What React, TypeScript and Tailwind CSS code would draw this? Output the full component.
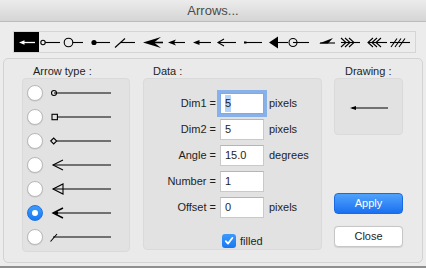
import React from 'react';

const CY = 42.5;

// Toolbar strip with all arrow styles, drawn in window coordinates
function ArrowStrip() {
  return (
    <svg width={401} height={20} viewBox="14 32 401 20">
      <rect x={14} y={32} width={25} height={20} fill="#000" />
      <line x1={22} y1={CY} x2={35} y2={CY} stroke="#fff" strokeWidth={1.3} />
      <polygon points={`19,${CY} 24.5,${CY - 2.3} 24.5,${CY + 2.3}`} fill="#fff" />

      <g stroke="#000" strokeWidth={1.1} fill="none">
        <circle cx={43} cy={CY} r={2.2} />
        <line x1={45.2} y1={CY} x2={60} y2={CY} />
        <circle cx={68.5} cy={CY} r={4.3} />
        <line x1={72.8} y1={CY} x2={83} y2={CY} />
        <line x1={94} y1={CY} x2={110} y2={CY} />
        <line x1={115} y1={47.5} x2={125} y2={38.5} />
        <line x1={120} y1={CY} x2={135} y2={CY} />
        <line x1={152} y1={CY} x2={163} y2={CY} strokeWidth={1.6} />
        <line x1={170} y1={CY} x2={185} y2={CY} />
        <line x1={196} y1={CY} x2={211} y2={CY} />
        <polyline points={`224,${CY - 3.5} 218,${CY} 224,${CY + 3.5}`} />
        <line x1={218} y1={CY} x2={236} y2={CY} />
        <line x1={244} y1={CY} x2={262} y2={CY} />
        <line x1={277} y1={CY} x2={288} y2={CY} />
        <circle cx={293} cy={CY} r={4} />
        <line x1={293} y1={CY} x2={309} y2={CY} />
        <line x1={320} y1={CY + 0.5} x2={335} y2={CY + 0.5} />
        <polyline points={`341,38 346,${CY} 341,47`} />
        <polyline points={`345,38 350,${CY} 345,47`} />
        <polyline points={`349,38 354,${CY} 349,47`} />
        <line x1={341} y1={CY} x2={360} y2={CY} />
        <polyline points={`373,38 368,${CY} 373,47`} />
        <polyline points={`377,38 372,${CY} 377,47`} />
        <polyline points={`381,38 376,${CY} 381,47`} />
        <line x1={368} y1={CY} x2={387} y2={CY} />
        <line x1={391} y1={47} x2={397} y2={38.5} />
        <line x1={395} y1={47} x2={401} y2={38.5} />
        <line x1={399} y1={47} x2={405} y2={38.5} />
        <line x1={390} y1={CY} x2={410} y2={CY} />
      </g>

      <g fill="#000">
        <circle cx={94} cy={CY} r={2.6} />
        <polygon points={`143,${CY} 161,37 154,${CY} 161,48`} />
        <polygon points={`168,${CY} 176,${CY - 3} 174,${CY} 176,${CY + 3}`} />
        <polygon points={`193,${CY} 199.5,${CY - 2.5} 199.5,${CY + 2.5}`} />
        <rect x={244} y={CY - 1} width={2.5} height={2} />
        <polygon points={`269,${CY} 278,36.5 278,48.5`} />
        <polygon points={`319,${CY + 1} 333,38 328,${CY + 1}`} />
      </g>
    </svg>
  );
}

function TypeArrow({ kind }: { kind: number }) {
  const y = 8;
  return (
    <svg width={62} height={16} viewBox="0 0 62 16">
      <g stroke="#000" strokeWidth={1.1} fill="none">
        {kind === 0 && (
          <>
            <circle cx={4} cy={y} r={2.5} />
            <line x1={4} y1={y} x2={61} y2={y} />
          </>
        )}
        {kind === 1 && (
          <>
            <rect x={2} y={y - 2.7} width={5.4} height={5.4} />
            <line x1={7.4} y1={y} x2={61} y2={y} />
          </>
        )}
        {kind === 2 && (
          <>
            <polygon points={`0.7,${y} 3.7,${y - 3} 6.7,${y} 3.7,${y + 3}`} />
            <line x1={6.7} y1={y} x2={61} y2={y} />
          </>
        )}
        {kind === 3 && (
          <>
            <polyline points={`13,${y - 5} 3,${y} 13,${y + 5}`} />
            <line x1={3} y1={y} x2={61} y2={y} />
          </>
        )}
        {kind === 4 && (
          <>
            <polygon points={`3,${y} 13,${y - 5} 13,${y + 5}`} />
            <line x1={3} y1={y} x2={61} y2={y} />
          </>
        )}
        {kind === 5 && (
          <>
            <polyline points={`13,${y - 5} 3,${y} 13,${y + 5}`} strokeWidth={1.4} />
            <line x1={3} y1={y} x2={61} y2={y} />
          </>
        )}
        {kind === 6 && (
          <>
            <line x1={0.5} y1={y + 4.5} x2={7} y2={y - 3} />
            <line x1={3} y1={y} x2={61} y2={y} />
          </>
        )}
      </g>
      {kind === 5 && <polygon points={`3,${y} 8,${y - 1.8} 8,${y + 1.8}`} fill="#000" />}
    </svg>
  );
}

function Radio({ checked }: { checked?: boolean }) {
  if (checked) {
    return (
      <div className="flex h-[16px] w-[16px] items-center justify-center rounded-full border border-[#1c74e3] bg-gradient-to-b from-[#3f9bfc] to-[#1679f3]">
        <div className="h-[6px] w-[6px] rounded-full bg-white" />
      </div>
    );
  }
  return (
    <div className="h-[16px] w-[16px] rounded-full border border-[#b9b9b9] bg-white shadow-[0_0.5px_1px_rgba(0,0,0,0.12)]" />
  );
}

function Field({
  label,
  value,
  unit,
  focused,
}: {
  label: string;
  value: string;
  unit?: string;
  focused?: boolean;
}) {
  return (
    <div className="flex h-[21px] items-center">
      <div className="w-[72px] text-right">{label}</div>
      <div
        className={
          focused
            ? 'ml-[4px] flex h-[21px] w-[44px] items-center border border-[#7eaaea] bg-white pl-[4px] shadow-[0_0_0_3px_rgba(105,160,236,0.75)]'
            : 'ml-[4px] flex h-[21px] w-[44px] items-center border border-[#c9c9c9] border-t-[#b5b5b5] bg-white pl-[4px]'
        }
      >
        {focused ? <span className="bg-[#b3d4fd]">{value}</span> : value}
      </div>
      {unit && <div className="ml-[5px]">{unit}</div>}
    </div>
  );
}

export default function App() {
  const kinds = [0, 1, 2, 3, 4, 5, 6];
  return (
    <div className="flex h-[268px] w-[426px] flex-col overflow-hidden bg-[#ececec] font-['Liberation_Sans',Arial,sans-serif] text-[11px] text-[#1e1e1e]">
      {/* Title bar */}
      <div className="flex h-[22px] shrink-0 items-center justify-center border-b border-[#bcbcbc] bg-gradient-to-b from-[#ececec] to-[#d5d5d5] text-[13px] text-[#4b4b4b]">
        Arrows...
      </div>

      {/* Arrow style strip */}
      <div className="ml-[13px] mt-[9px] h-[22px] w-[403px] shrink-0 border border-[#d5d5d5]">
        <ArrowStrip />
      </div>

      {/* Main frame */}
      <div className="mx-[3px] mt-[5px] flex h-[205px] shrink-0 rounded-[5px] border border-[#d3d3d3] bg-[#eaeaea] pl-[18px]">
        {/* Arrow type */}
        <div className="w-[108px]">
          <div className="h-[19px] pl-[11px] pt-[6px] leading-[13px]">Arrow type :</div>
          <div className="h-[174px] rounded-[4px] border border-[#dadada] bg-[#e2e2e2] pl-[4px] pt-[2px]">
            {kinds.map((k) => (
              <div key={k} className="flex h-[24px] items-center">
                <Radio checked={k === 5} />
                <div className="ml-[7px]">
                  <TypeArrow kind={k} />
                </div>
              </div>
            ))}
          </div>
        </div>

        {/* Data */}
        <div className="ml-[13px] w-[179px]">
          <div className="h-[19px] pl-[10px] pt-[6px] leading-[13px]">Data :</div>
          <div className="flex h-[172px] flex-col gap-[5px] rounded-[4px] border border-[#dadada] bg-[#e2e2e2] pt-[14px]">
            <Field label="Dim1 =" value="5" unit="pixels" focused />
            <Field label="Dim2 =" value="5" unit="pixels" />
            <Field label="Angle =" value="15.0" unit="degrees" />
            <Field label="Number =" value="1" />
            <Field label="Offset =" value="0" unit="pixels" />
            <div className="mt-[10px] flex items-center pl-[78px]">
              <div className="flex h-[14px] w-[14px] items-center justify-center rounded-[3px] bg-gradient-to-b from-[#3d9afc] to-[#1677f2]">
                <svg width={10} height={10} viewBox="0 0 10 10">
                  <polyline points="1.8,5.2 4,7.6 8.3,2" fill="none" stroke="#fff" strokeWidth={1.8} strokeLinecap="round" strokeLinejoin="round" />
                </svg>
              </div>
              <div className="ml-[4px]">filled</div>
            </div>
          </div>
        </div>

        {/* Drawing + buttons */}
        <div className="ml-[12px] w-[69px]">
          <div className="h-[19px] pl-[11px] pt-[6px] leading-[13px]">Drawing :</div>
          <div className="flex h-[57px] items-center justify-center rounded-[4px] border border-[#dadada] bg-[#e2e2e2] pt-[3px]">
            <svg width={38} height={6} viewBox="0 0 38 6">
              <line x1={2} y1={3} x2={38} y2={3} stroke="#000" strokeWidth={1.1} />
              <polygon points="0,3 6,1 6,5" fill="#000" />
            </svg>
          </div>
          <div className="mt-[58px] flex h-[21px] items-center justify-center rounded-[4px] border border-[#1a6be0] bg-gradient-to-b from-[#4fa2fb] to-[#1a70f0] text-[11px] text-white">
            Apply
          </div>
          <div className="mt-[12px] flex h-[21px] items-center justify-center rounded-[4px] border border-[#c6c6c6] bg-white shadow-[0_0.5px_1px_rgba(0,0,0,0.1)]">
            Close
          </div>
        </div>
      </div>

      <div className="mt-auto h-[2px] shrink-0 bg-[#8f8f8f]" />
    </div>
  );
}
